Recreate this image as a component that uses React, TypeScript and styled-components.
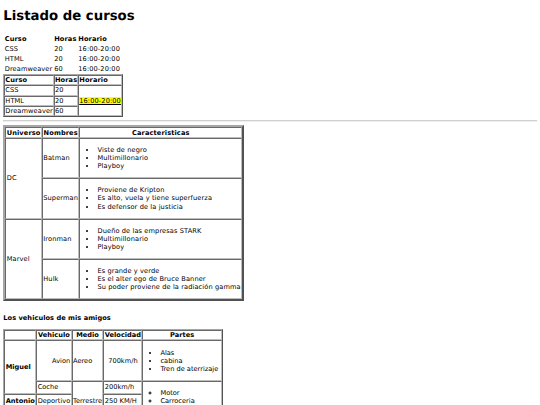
import React from 'react';
import styled, { createGlobalStyle } from 'styled-components';

const GlobalStyle = createGlobalStyle`
  html, body { margin: 0; padding: 0; background: #ffffff; }
  body {
    font-family: "DejaVu Sans", Verdana, sans-serif;
    font-size: 6.64px;
    line-height: 8.07px;
    color: #000000;
    text-rendering: geometricPrecision;
  }
`;

const Page = styled.div`
  margin: 3.3px;
`;

const Title = styled.h1`
  font-size: 13.28px;
  line-height: 16.14px;
  font-weight: bold;
  margin: 8.9px 0;
`;

const Subtitle = styled.h4`
  font-size: 6.64px;
  line-height: 8.07px;
  font-weight: bold;
  letter-spacing: 0.04px;
  margin: 12.4px 0 7px;
`;

const Rule = styled.hr`
  margin: 3.3px 0;
  border: 0;
  border-top: 1px solid #cfcfcf;
  border-bottom: 1px solid #efefef;
`;

const Table = styled.table<{ $frame?: number; $spacing?: number; $pad?: number; $tracking?: number }>`
  border-collapse: separate;
  border-spacing: ${(p) => p.$spacing ?? 0}px;
  font-size: inherit;
  line-height: inherit;
  letter-spacing: ${(p) => p.$tracking ?? 0.1}px;
  border: ${(p) => (p.$frame ? `${p.$frame}px outset #a6a6a6` : '0')};

  & td,
  & th {
    padding: ${(p) => p.$pad ?? 0.415}px;
  }
`;

const Td = styled.td<{ $align?: string; $framed?: boolean }>`
  text-align: ${(p) => p.$align ?? 'left'};
  vertical-align: middle;
  border: ${(p) => (p.$framed ? '1px inset #bdbdbd' : '0')};
`;

const Th = styled.th<{ $align?: string; $framed?: boolean }>`
  font-weight: bold;
  text-align: ${(p) => p.$align ?? 'center'};
  vertical-align: middle;
  border: ${(p) => (p.$framed ? '1px inset #bdbdbd' : '0')};
`;

const List = styled.ul<{ $circle?: boolean }>`
  margin: 6.64px 0;
  padding-left: 16.6px;
  list-style-type: ${(p) => (p.$circle ? 'circle' : 'disc')};
`;

const Highlight = styled.mark`
  background: #ffff00;
  color: #000000;
  text-decoration: underline;
`;

const cursos = [
  { curso: 'CSS', horas: '20' },
  { curso: 'HTML', horas: '20' },
  { curso: 'Dreamweaver', horas: '60' },
];

const heroes = [
  {
    universo: 'DC',
    items: [
      { nombre: 'Batman', rasgos: ['Viste de negro', 'Multimillonario', 'Playboy'] },
      { nombre: 'Superman', rasgos: ['Proviene de Kripton', 'Es alto, vuela y tiene superfuerza', 'Es defensor de la justicia'] },
    ],
  },
  {
    universo: 'Marvel',
    items: [
      { nombre: 'Ironman', rasgos: ['Dueño de las empresas STARK', 'Multimillonario', 'Playboy'] },
      { nombre: 'Hulk', rasgos: ['Es grande y verde', 'Es el alter ego de Bruce Banner', 'Su poder proviene de la radiación gamma'] },
    ],
  },
];

export default function App() {
  return (
    <>
      <GlobalStyle />
      <Page>
        <Title>Listado de cursos</Title>

        <Table $spacing={1}>
          <tbody>
            <tr>
              <Th $align="left">Curso</Th>
              <Th $align="left">Horas</Th>
              <Th $align="left">Horario</Th>
            </tr>
            {cursos.map((c) => (
              <tr key={c.curso}>
                <Td>{c.curso}</Td>
                <Td>{c.horas}</Td>
                <Td>16:00-20:00</Td>
              </tr>
            ))}
          </tbody>
        </Table>

        <Table $frame={1} $pad={0}>
          <tbody>
            <tr>
              <Th $align="left" $framed>Curso</Th>
              <Th $align="left" $framed>Horas</Th>
              <Th $align="left" $framed>Horario</Th>
            </tr>
            {cursos.map((c, i) => (
              <tr key={c.curso}>
                <Td $framed>{c.curso}</Td>
                <Td $framed>{c.horas}</Td>
                {i === 0 && (
                  <Td $framed rowSpan={3}>
                    <Highlight>16:00-20:00</Highlight>
                  </Td>
                )}
              </tr>
            ))}
          </tbody>
        </Table>

        <Rule />

        <Table $frame={2}>
          <tbody>
            <tr>
              <Th $framed>Universo</Th>
              <Th $framed>Nombres</Th>
              <Th $framed>Caracteristicas</Th>
            </tr>
            {heroes.map((u) =>
              u.items.map((h, i) => (
                <tr key={h.nombre}>
                  {i === 0 && (
                    <Td $framed rowSpan={u.items.length}>
                      {u.universo}
                    </Td>
                  )}
                  <Td $framed>{h.nombre}</Td>
                  <Td $framed>
                    <List>
                      {h.rasgos.map((r) => (
                        <li key={r}>{r}</li>
                      ))}
                    </List>
                  </Td>
                </tr>
              ))
            )}
          </tbody>
        </Table>

        <Subtitle>Los vehiculos de mis amigos</Subtitle>

        <Table $frame={1} $tracking={0}>
          <tbody>
            <tr>
              <Th $framed></Th>
              <Th $framed>Vehiculo</Th>
              <Th $framed>Medio</Th>
              <Th $framed>Velocidad</Th>
              <Th $framed>Partes</Th>
            </tr>
            <tr>
              <Th $framed $align="left" rowSpan={2}>Miguel</Th>
              <Td $framed $align="right">Avion</Td>
              <Td $framed>Aereo</Td>
              <Td $framed $align="center">700km/h</Td>
              <Td $framed>
                <List>
                  <li>Alas</li>
                  <li>cabina</li>
                  <li>Tren de aterrizaje</li>
                </List>
              </Td>
            </tr>
            <tr>
              <Td $framed>Coche</Td>
              <Td $framed rowSpan={3}>Terrestre</Td>
              <Td $framed>200km/h</Td>
              <Td $framed rowSpan={3}>
                <List $circle>
                  <li>Motor</li>
                  <li>Carroceria</li>
                  <li>Sistema de frenos</li>
                </List>
              </Td>
            </tr>
            <tr>
              <Th $framed $align="left">Antonio</Th>
              <Td $framed>Deportivo</Td>
              <Td $framed>250 KM/H</Td>
            </tr>
            <tr>
              <Th $framed $align="left">Luis</Th>
              <Td $framed>Moto</Td>
              <Td $framed>180 KM/H</Td>
            </tr>
          </tbody>
        </Table>
      </Page>
    </>
  );
}
